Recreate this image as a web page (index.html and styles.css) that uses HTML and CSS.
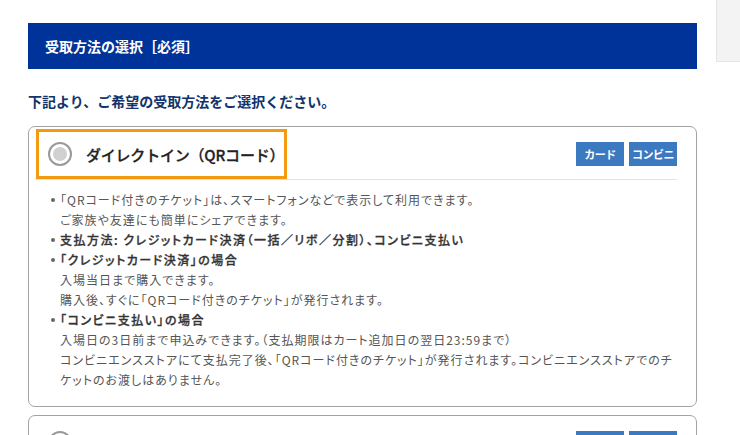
FILE: index.html
```html
<!DOCTYPE html>
<html lang="ja">
<head>
  <meta charset="UTF-8">
  <meta name="viewport" content="width=device-width, initial-scale=1.0">
  <title>受取方法の選択</title>
  <link rel="stylesheet" href="styles.css">
</head>
<body>

<div class="page">
  <main class="main">
    <h2 class="section-title">受取方法の選択［必須］</h2>
    <p class="lead">下記より、ご希望の受取方法をご選択ください。</p>

    <!-- ダイレクトイン -->
    <div class="method">
      <div class="method-head">
        <label class="method-label is-selected">
          <span class="radio"></span>
          <span class="method-name">ダイレクトイン（QRコード）</span>
        </label>
        <div class="pay-tags">
          <span class="tag">カード</span>
          <span class="tag">コンビニ</span>
        </div>
      </div>
      <ul class="notes">
        <li>「QRコード付きのチケット」は、スマートフォンなどで表示して利用できます。<br>ご家族や友達にも簡単にシェアできます。</li>
        <li><strong>支払方法: クレジットカード決済（一括／リボ／分割）、コンビニ支払い</strong></li>
        <li><strong>「クレジットカード決済」の場合</strong><br>入場当日まで購入できます。<br>購入後、すぐに「QRコード付きのチケット」が発行されます。</li>
        <li><strong>「コンビニ支払い」の場合</strong><br>入場日の3日前まで申込みできます。（支払期限はカート追加日の翌日23:59まで）<br>コンビニエンスストアにて支払完了後、「QRコード付きのチケット」が発行されます。コンビニエンスストアでのチ<br>ケットのお渡しはありません。</li>
      </ul>
    </div>

    <!-- 紙チケット -->
    <div class="method">
      <div class="method-head">
        <label class="method-label">
          <span class="radio"></span>
          <span class="method-name">紙チケット（発券）</span>
        </label>
        <div class="pay-tags">
          <span class="tag">カード</span>
          <span class="tag">コンビニ</span>
        </div>
      </div>
    </div>
  </main>

  <aside class="side"></aside>
</div>

</body>
</html>
```

FILE: styles.css
```css
body {
  margin: 0;
  font-family: "Noto Sans CJK JP", "Noto Sans", sans-serif;
  color: #555;
  background: #fff;
  overflow-x: hidden;
}
.page {
  display: flex;
  align-items: flex-start;
  width: 740px;
}
.main {
  width: 669px;
  margin-left: 28px;
  padding-top: 23px;
}
.side {
  width: 23px;
  height: 61px;
  margin-left: 19px;
  background: #f3f3f3;
  border-left: 1px solid #e4e4e4;
  border-bottom: 1px solid #e4e4e4;
}
.section-title {
  margin: 0;
  height: 46px;
  padding-left: 17px;
  display: flex;
  align-items: center;
  background: #003399;
  color: #fff;
  font-size: 14px;
  font-weight: bold;
}
.lead {
  margin: 0;
  padding: 23px 0 16px;
  line-height: 18px;
  font-size: 14px;
  font-weight: bold;
  color: #12336b;
}
.method {
  border: 1px solid #a3a3a3;
  border-radius: 7px;
  margin-bottom: 8px;
}
.method-head {
  display: flex;
  align-items: center;
  justify-content: space-between;
  margin: 2px 19px 0 7px;
  border-bottom: 1px solid #e2e2e2;
}
.method-label {
  display: flex;
  align-items: center;
  gap: 14px;
  height: 44px;
  width: 236px;
  padding-left: 9px;
  border: 3px solid transparent;
}
.method-label.is-selected {
  border-color: #f39a12;
}
.radio {
  box-sizing: border-box;
  width: 24px;
  height: 24px;
  border: 2px solid #999;
  border-radius: 50%;
  display: flex;
  align-items: center;
  justify-content: center;
}
.radio::after {
  content: "";
  width: 14px;
  height: 14px;
  border-radius: 50%;
  background: #d0d0d0;
}
.method-name {
  font-size: 15px;
  font-weight: 500;
  color: #222;
  letter-spacing: -0.2px;
  -webkit-text-stroke: 0.3px #222;
}
.pay-tags {
  display: flex;
  gap: 5px;
}
.tag {
  width: 48px;
  height: 24px;
  display: flex;
  align-items: center;
  justify-content: center;
  background: #3b79c0;
  color: #fff;
  font-size: 11px;
  font-weight: bold;
  letter-spacing: -0.5px;
}
.notes {
  list-style: none;
  margin: 0 8px 0 7px;
  padding: 10px 0 16px;
  font-size: 12px;
  line-height: 20px;
  letter-spacing: 1px;
  font-feature-settings: "palt";
}
.notes li {
  position: relative;
  padding-left: 24px;
}
.notes li::before {
  content: "";
  position: absolute;
  left: 15px;
  top: 8px;
  width: 4px;
  height: 4px;
  border-radius: 50%;
  background: #666;
}
.notes strong {
  font-weight: 500;
  color: #333;
  letter-spacing: 1.5px;
  -webkit-text-stroke: 0.3px #333;
}
```
